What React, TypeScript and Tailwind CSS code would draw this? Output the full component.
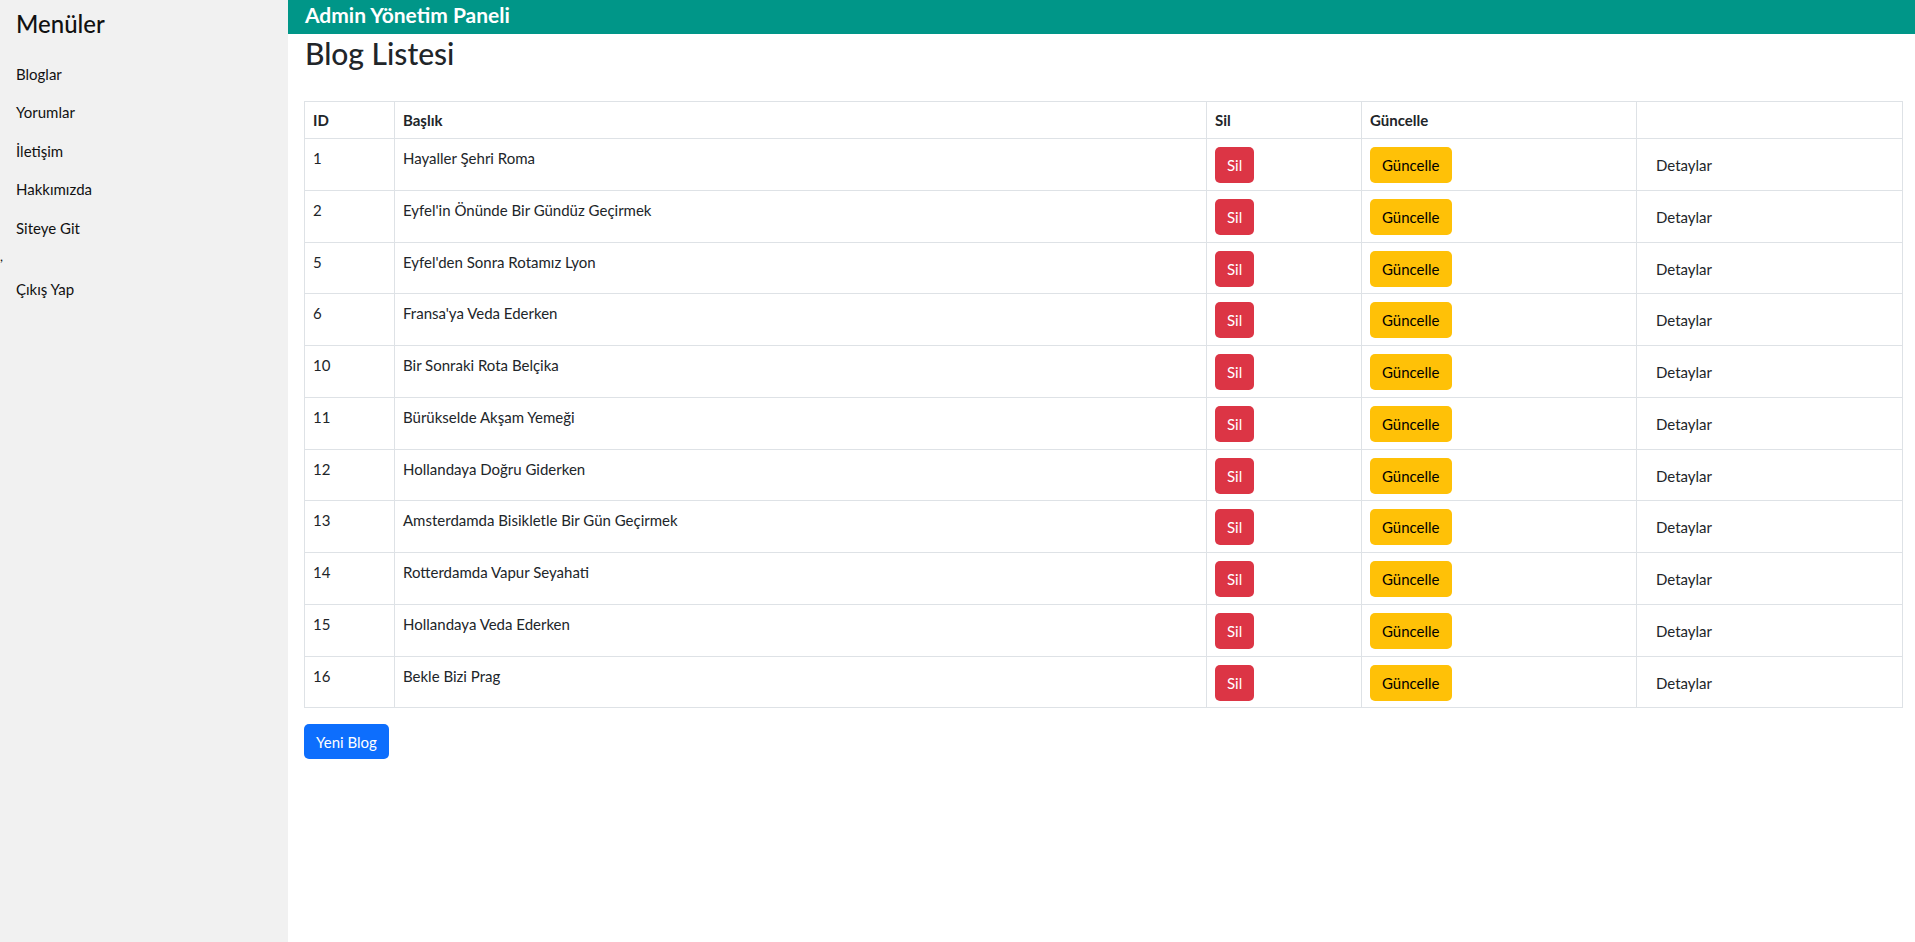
import React from "react";

interface Blog {
  id: number;
  title: string;
}

const blogs: Blog[] = [
  { id: 1, title: "Hayaller Şehri Roma" },
  { id: 2, title: "Eyfel'in Önünde Bir Gündüz Geçirmek" },
  { id: 5, title: "Eyfel'den Sonra Rotamız Lyon" },
  { id: 6, title: "Fransa'ya Veda Ederken" },
  { id: 10, title: "Bir Sonraki Rota Belçika" },
  { id: 11, title: "Bürükselde Akşam Yemeği" },
  { id: 12, title: "Hollandaya Doğru Giderken" },
  { id: 13, title: "Amsterdamda Bisikletle Bir Gün Geçirmek" },
  { id: 14, title: "Rotterdamda Vapur Seyahati" },
  { id: 15, title: "Hollandaya Veda Ederken" },
  { id: 16, title: "Bekle Bizi Prag" },
];

const menuItems = ["Bloglar", "Yorumlar", "İletişim", "Hakkımızda", "Siteye Git"];

function Sidebar() {
  return (
    <aside className="w-[288px] shrink-0 bg-[#f1f1f1] text-[#111]">
      <h4 className="pt-[10px] pl-4 text-[24px] leading-[1.2] font-medium">Menüler</h4>
      <ul className="mt-[24px] text-[15px] leading-[22px]">
        {menuItems.map((item, i) => (
          <li key={item} className={i === 0 ? "pl-4" : "pl-4 mt-[16.5px]"}>
            <a href="#" className="cursor-pointer">
              {item}
            </a>
          </li>
        ))}
        <li className="mt-[6px] pl-0 text-[13px]">,</li>
        <li className="pl-4 mt-[11px]">
          <a href="#">Çıkış Yap</a>
        </li>
      </ul>
    </aside>
  );
}

function BlogTable() {
  return (
    <table className="w-full border-collapse text-[15px] leading-[22px] text-[#212529]">
      <colgroup>
        <col className="w-[90px]" />
        <col className="w-[812px]" />
        <col className="w-[155px]" />
        <col className="w-[275px]" />
        <col />
      </colgroup>
      <thead>
        <tr className="text-left font-bold">
          <th className="border border-[#dee2e6] px-2 pt-[7px] pb-[7px]">ID</th>
          <th className="border border-[#dee2e6] px-2 pt-[7px] pb-[7px]">Başlık</th>
          <th className="border border-[#dee2e6] px-2 pt-[7px] pb-[7px]">Sil</th>
          <th className="border border-[#dee2e6] px-2 pt-[7px] pb-[7px]">Güncelle</th>
          <th className="border border-[#dee2e6] px-2 pt-[7px] pb-[7px]"></th>
        </tr>
      </thead>
      <tbody>
        {blogs.map((b) => (
          <tr key={b.id} className="align-top">
            <td className="border border-[#dee2e6] px-2 pt-[8px] pb-[6.75px]">{b.id}</td>
            <td className="border border-[#dee2e6] px-2 pt-[8px] pb-[6.75px]">{b.title}</td>
            <td className="border border-[#dee2e6] px-2 pt-[8px] pb-[6.75px]">
              <button className="h-9 rounded-[5px] bg-[#dc3545] px-3 text-white">Sil</button>
            </td>
            <td className="border border-[#dee2e6] px-2 pt-[8px] pb-[6.75px]">
              <button className="h-9 rounded-[5px] bg-[#ffc107] px-3 text-black">Güncelle</button>
            </td>
            <td className="border border-[#dee2e6] px-2 pt-[8px] pb-[6.75px]">
              <a href="#" className="inline-flex h-9 items-center px-[11px] text-[#212529]">
                Detaylar
              </a>
            </td>
          </tr>
        ))}
      </tbody>
    </table>
  );
}

export default function App() {
  return (
    <div className="flex min-h-[942px] bg-white font-['Lato','Noto_Sans',sans-serif]">
      <Sidebar />
      <main className="flex-1">
        <header className="h-[34px] bg-[#009688] px-[17px] text-[21px] leading-[29px] font-bold text-white">
          Admin Yönetim Paneli
        </header>
        <div className="pl-4 pr-3">
          <h2 className="mt-[1px] pl-px text-[30px] leading-[36px] font-medium text-[#212529]">
            Blog Listesi
          </h2>
          <div className="mt-[30px]">
            <BlogTable />
          </div>
          <button className="mt-4 h-[35px] rounded-[5px] bg-[#0d6efd] px-3 text-[15px] text-white">
            Yeni Blog
          </button>
        </div>
      </main>
    </div>
  );
}
